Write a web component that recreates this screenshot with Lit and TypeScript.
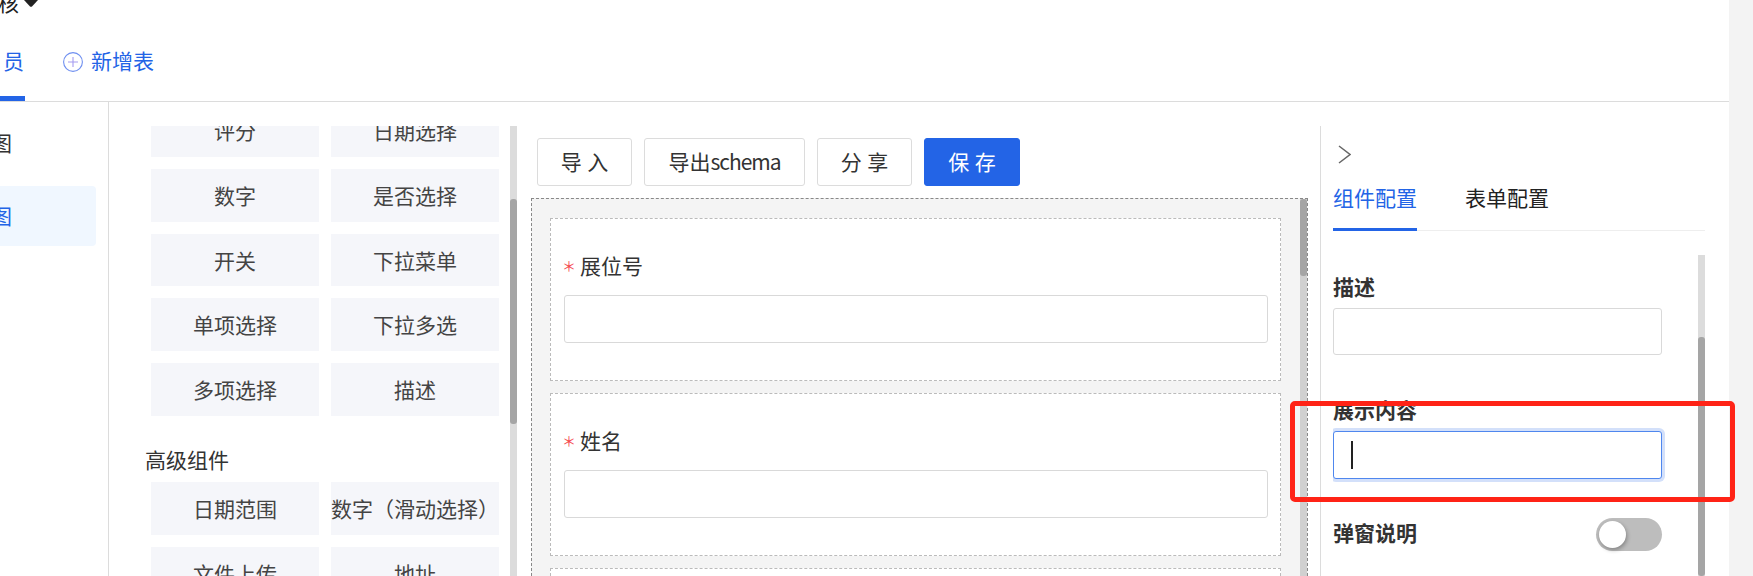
import { LitElement, html, css } from "lit";
import { customElement } from "lit/decorators.js";

const basic = ["评分", "日期选择", "数字", "是否选择", "开关", "下拉菜单", "单项选择", "下拉多选", "多项选择", "描述"];
const advanced = ["日期范围", "数字（滑动选择）", "文件上传", "地址"];

@customElement("app-root")
export class AppRoot extends LitElement {
  static styles = css`
    :host {
      display: flex; width: 1753px; height: 576px; overflow: hidden; background: #fff;
      font-family: "Noto Sans CJK SC", "Noto Sans", sans-serif; color: #333; font-size: 21px; line-height: 30px;
    }
    * { box-sizing: border-box; }
    .main { width: 1729px; height: 576px; display: flex; flex-direction: column; overflow: hidden; }
    .strip { width: 24px; background: #f3f3f3; }

    .header { height: 102px; flex: none; border-bottom: 1px solid #dcdcdc; overflow: hidden; }
    .crumb { display: flex; height: 24px; margin-top: -10px; line-height: 24px; color: #222; }
    .crumb span { margin-left: -2px; }
    .crumb svg { margin: 10px 0 0 5px; }
    .tabs { display: flex; align-items: flex-start; height: 63px; margin-top: 24px; gap: 38px; }
    .tab { height: 63px; width: 25px; padding: 0 0 10px 3px; line-height: 44px; color: #2364e6; border-bottom: 5px solid #2364e6; white-space: nowrap; }
    .add { display: flex; align-items: flex-start; gap: 8px; height: 48px; line-height: 44px; color: #2364e6; }
    .add svg { display: block; margin-top: 14px; }

    .body { display: flex; flex: 1; min-height: 0; }
    .nav { width: 109px; flex: none; border-right: 1px solid #dcdcdc; padding-top: 11px; display: flex; flex-direction: column; gap: 13px; }
    .nav-item { width: 96px; height: 60px; line-height: 58px; overflow: hidden; border-radius: 0 4px 4px 0; }
    .nav-item span { display: block; margin-left: -9px; }
    .nav-item.active { background: #f0f7ff; color: #2364e6; }

    .library { width: 409px; flex: none; display: flex; padding-top: 24px; }
    .lib-view { width: 401px; overflow: hidden; padding-left: 36px; }
    .lib-scroll { margin-top: -22px; }
    .lib-title { height: 66px; padding-top: 22px; line-height: 42px; }
    .lib-grid { display: grid; grid-template-columns: 168px 168px; grid-auto-rows: 52.8px; gap: 12px; margin-left: 6px; }
    .lib-item { background: #f5f6fa; text-align: center; line-height: 52px; white-space: nowrap; color: #444; }
    .bar { flex: none; width: 7px; display: flex; flex-direction: column; background: #dcdcdc; }
    .bar .thumb { width: 7px; background: #a5a5a5; border-radius: 3px; }

    .center { width: 802px; flex: none; display: flex; flex-direction: column; }
    .toolbar { display: flex; gap: 12px; padding: 36px 0 0 19px; height: 96px; flex: none; }
    .btn { height: 48px; border: 1px solid #dcdcdc; border-radius: 3px; background: #fff; padding: 0 0 2px; font: inherit; line-height: 44px; color: #333; text-align: center; word-spacing: 1px; }
    .btn .latin { letter-spacing: -1px; }
    .btn.w1 { width: 95px; }
    .btn.w2 { width: 161px; }
    .btn.primary { width: 96px; background: #2364e6; border-color: #2364e6; color: #fff; }
    .canvas { margin-left: 13px; width: 777px; flex: 1; min-height: 0; border: 1px dashed #888; border-bottom: none; background: #f4f4f4; display: flex; overflow: hidden; }
    .cards { width: 768px; flex: none; padding: 19px 19px 0 18px; display: flex; flex-direction: column; gap: 12px; }
    .card { flex: none; height: 163px; background: #fff; border: 1px dashed #bbb; padding: 31px 12px 0 13px; }
    .card-label { height: 30px; margin-bottom: 15px; display: flex; align-items: center; margin-left: -1px; }
    .star { color: #f5484d; width: 17px; font-size: 14px; line-height: 30px; margin-left: -1px; margin-right: 1px; }
    .card-input { height: 48px; border: 1px solid #d9d9d9; border-radius: 3px; background: #fff; }
    .canvas .bar { background: #d0d0d0; }

    .panel { flex: 1; min-width: 0; border-left: 1px solid #dcdcdc; margin-top: 24px; padding-left: 12px; display: flex; flex-direction: column; width: 409px; }
    .chev { height: 46px; padding-top: 19px; flex: none; }
    .chev svg { display: block; margin-left: 5px; }
    .ptabs { width: 372px; height: 59px; flex: none; display: flex; gap: 48px; border-bottom: 1px solid #eee; }
    .ptab { height: 59px; line-height: 50px; }
    .ptab.active { color: #2364e6; border-bottom: 3px solid #2364e6; }
    .ptab:not(.active) { color: #222; }
    .config { flex: 1; min-height: 0; margin-top: 24px; width: 372px; display: flex; justify-content: space-between; overflow: hidden; }
    .fields { width: 329px; flex: none; padding-top: 18px; }
    .field-label { font-weight: 700; height: 30px; line-height: 26px; color: #333; }
    .switch-row .field-label { line-height: 25px; }
    .field-input { height: 47px; margin-top: 5px; border: 1px solid #d9d9d9; border-radius: 3px; background: #fff; margin-bottom: 41px; }
    .field-input.focus { border-color: #4f87ee; box-shadow: 0 0 0 3px #d3e0fa; margin-top: 5px; margin-bottom: 39px; height: 48px; padding: 9px 0 0 17px; }
    .caret { width: 2px; height: 28px; background: #222; }
    .switch-row { display: flex; justify-content: space-between; align-items: center; height: 33px; }
    .switch { width: 66px; height: 33px; border-radius: 17px; background: #bdbdbd; padding: 3px; }
    .knob { width: 27px; height: 27px; border-radius: 50%; background: #fff; box-shadow: 1px 2px 4px rgba(0,0,0,.3); }

    .highlight { position: absolute; left: 1290px; top: 401px; width: 445px; height: 101px; border: 5px solid #ff2316; border-radius: 5px; pointer-events: none; }
  `;

  render() {
    return html`
      <div class="main">
        <div class="header">
          <div class="crumb"><span>核</span><svg width="14" height="7" viewBox="0 0 14 7"><path d="M0 0H14L8 6.500Q7 7 6 6.500Z" fill="#222"/></svg></div>
          <div class="tabs">
            <div class="tab">员</div>
            <div class="add">
              <svg width="20" height="20" viewBox="0 0 20 20" fill="none"><circle cx="10" cy="10" r="9.400" stroke="#6f8ff0" stroke-width="1.100"/><path d="M10 5V15M5 10H15" stroke="#a59cf0" stroke-width="1.100"/></svg>
              新增表
            </div>
          </div>
        </div>
        <div class="body">
          <div class="nav">
            <div class="nav-item"><span>图</span></div>
            <div class="nav-item active"><span>图</span></div>
          </div>
          <div class="library">
            <div class="lib-view">
              <div class="lib-scroll">
                <div class="lib-grid">${basic.map((t) => html`<div class="lib-item">${t}</div>`)}</div>
                <div class="lib-title">高级组件</div>
                <div class="lib-grid">${advanced.map((t) => html`<div class="lib-item">${t}</div>`)}</div>
              </div>
            </div>
            <div class="bar"><div class="thumb" style="height:225px;margin-top:73px"></div></div>
          </div>
          <div class="center">
            <div class="toolbar">
              <button class="btn w1">导 入</button>
              <button class="btn w2">导出<span class="latin">schema</span></button>
              <button class="btn w1">分 享</button>
              <button class="btn primary">保 存</button>
            </div>
            <div class="canvas">
              <div class="cards">
                <div class="card"><div class="card-label"><span class="star">＊</span>展位号</div><div class="card-input"></div></div>
                <div class="card"><div class="card-label"><span class="star">＊</span>姓名</div><div class="card-input"></div></div>
                <div class="card"></div>
              </div>
              <div class="bar"><div class="thumb" style="height:77px"></div></div>
            </div>
          </div>
          <div class="panel">
            <div class="chev"><svg width="13" height="19" viewBox="0 0 13 19" fill="none"><path d="M1 1L12 9.500L1 18" stroke="#666" stroke-width="1.500"/></svg></div>
            <div class="ptabs">
              <div class="ptab active">组件配置</div>
              <div class="ptab">表单配置</div>
            </div>
            <div class="config">
              <div class="fields">
                <div class="field-label">描述</div>
                <div class="field-input"></div>
                <div class="field-label">展示内容</div>
                <div class="field-input focus"><div class="caret"></div></div>
                <div class="switch-row">
                  <div class="field-label">弹窗说明</div>
                  <div class="switch"><div class="knob"></div></div>
                </div>
              </div>
              <div class="bar"><div class="thumb" style="height:400px;margin-top:82px"></div></div>
            </div>
          </div>
        </div>
      </div>
      <div class="strip"></div>
      <div class="highlight"></div>
    `;
  }
}
